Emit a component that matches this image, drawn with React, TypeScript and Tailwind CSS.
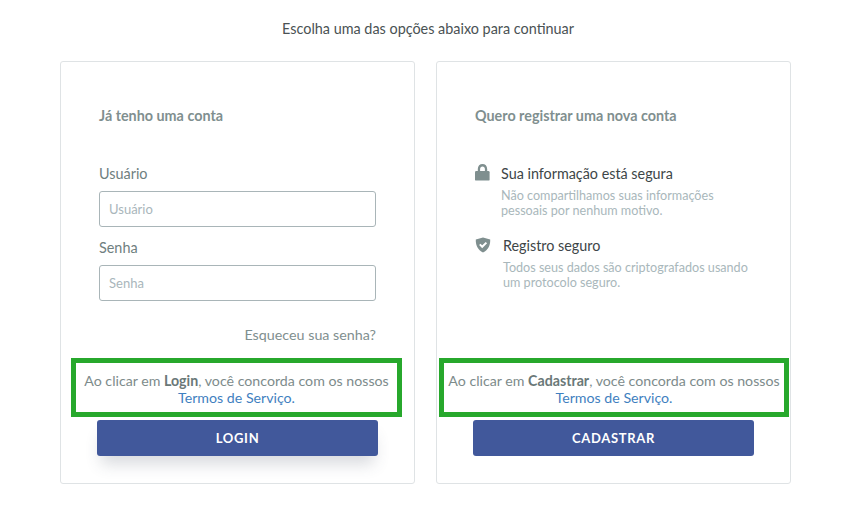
import type { ReactNode } from 'react';

function LockIcon() {
  return (
    <svg width="15" height="17" viewBox="0 0 15 17" className="shrink-0 -mt-[1px]" fill="#7f8f8f">
      <path d="M2.800 8V4.900C2.800 2 4.800 0 7.500 0s4.700 2 4.700 4.900V8H9.900V5c0-1.500-1-2.600-2.400-2.600S5.100 3.500 5.100 5v3z" />
      <rect x="0" y="7" width="14.600" height="9.600" rx="1.200" />
    </svg>
  );
}

function ShieldIcon() {
  return (
    <svg width="16" height="16" viewBox="0 0 16 16" className="shrink-0" fill="none">
      <path
        d="M8 .6 15.2 2.600c.2 5.800-2 10.600-7.200 12.900C2.800 13.200.6 8.400.8 2.600z"
        fill="#7f8f8f"
      />
      <path d="M4.800 7.400 7.200 9.800 11.400 5.600" stroke="#fff" strokeWidth="2" />
    </svg>
  );
}

function Field({ label }: { label: string }) {
  return (
    <div className="flex flex-col">
      <label className="text-[14.4px] leading-[17px] text-[#6f8080] mb-[9px]">{label}</label>
      <input
        placeholder={label}
        className="w-full h-[36px] rounded-[3px] border border-[#a9b5b8] bg-white px-[9px] text-[13px] placeholder:text-[#a9b6bb] outline-none"
      />
    </div>
  );
}

function Terms({ action, box }: { action: string; box: string }) {
  return (
    <div
      className={`h-[59px] pt-[3px] border-[5px] border-[#27a82c] flex flex-col items-center justify-center text-[14.2px] leading-[17px] text-[#7d8b8b] whitespace-nowrap ${box}`}
    >
      <p>
        Ao clicar em <strong className="font-bold text-[#6a7878]">{action}</strong>, você concorda com os nossos
      </p>
      <a className="text-[#3f7fc0]">Termos de Serviço.</a>
    </div>
  );
}

function Card({ children }: { children: ReactNode }) {
  return (
    <section className="w-[355px] h-[423px] flex flex-col rounded-[3px] border border-[#dfe3e5] bg-white pt-[44px]">
      {children}
    </section>
  );
}

function Feature({ icon, title, text, gap }: { icon: ReactNode; title: string; text: string[]; gap: string }) {
  return (
    <div className={`flex ${gap}`}>
      {icon}
      <div>
        <h3 className="text-[14.35px] leading-[17px] text-[#3d4648]">{title}</h3>
        <p className="mt-[6px] text-[12.6px] leading-[15px] text-[#a9b7bb]">
          {text[0]}
          <br />
          {text[1]}
        </p>
      </div>
    </div>
  );
}

export default function App() {
  return (
    <main className="w-[854px] h-[521px] bg-white overflow-hidden font-['Lato',sans-serif]">
      <p className="pt-[20px] pl-[2px] h-[61px] text-center text-[14.4px] leading-[17px] text-[#4a5254]">
        Escolha uma das opções abaixo para continuar
      </p>

      <div className="flex gap-[21px] pl-[60px]">
        <Card>
          <div className="px-[38px]">
            <h2 className="text-[14.35px] leading-[20px] font-bold text-[#7f8f8f]">Já tenho uma conta</h2>
            <div className="mt-[39px] flex flex-col gap-[12px]">
              <Field label="Usuário" />
              <Field label="Senha" />
            </div>
            <p className="mt-[25px] text-right text-[14.3px] leading-[17px] text-[#7f8f8f]">Esqueceu sua senha?</p>
          </div>
          <Terms action="Login" box="mt-[15px] ml-[10px] w-[331px]" />
          <button className="mt-[3px] ml-[36px] w-[281px] h-[36px] pt-[2px] rounded-[3px] bg-[#41589b] text-white text-[13px] font-bold tracking-[0.7px] shadow-[0_12px_16px_-4px_rgba(60,70,90,0.2)]">
            LOGIN
          </button>
        </Card>

        <Card>
          <div className="px-[38px] h-[252px]">
            <h2 className="text-[14.35px] leading-[20px] font-bold text-[#7f8f8f]">Quero registrar uma nova conta</h2>
            <div className="mt-[39px] flex flex-col gap-[19px]">
              <Feature
                icon={<LockIcon />}
                title="Sua informação está segura"
                text={['Não compartilhamos suas informações', 'pessoais por nenhum motivo.']}
                gap="gap-[11px]"
              />
              <Feature
                icon={<ShieldIcon />}
                title="Registro seguro"
                text={['Todos seus dados são criptografados usando', 'um protocolo seguro.']}
                gap="gap-[12px]"
              />
            </div>
          </div>
          <Terms action="Cadastrar" box="ml-[2px] w-[350px]" />
          <button className="mt-[3px] ml-[36px] w-[281px] h-[36px] pt-[2px] rounded-[3px] bg-[#41589b] text-white text-[13px] font-bold tracking-[0.7px]">
            CADASTRAR
          </button>
        </Card>
      </div>
    </main>
  );
}
